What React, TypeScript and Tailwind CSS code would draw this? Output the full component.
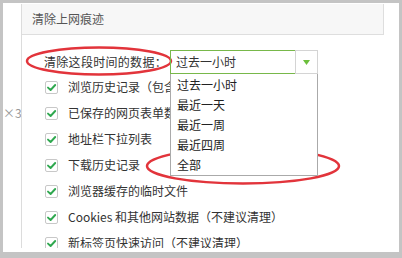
const FONT = "font-['Microsoft_YaHei','Noto_Sans_CJK_SC',sans-serif]"

const RANGES = ['过去一小时', '最近一天', '最近一周', '最近四周', '全部']

const ITEMS = [
  '浏览历史记录（包含地址栏中的记录）',
  '已保存的网页表单数据',
  '地址栏下拉列表',
  '下载历史记录',
  '浏览器缓存的临时文件',
  'Cookies 和其他网站数据（不建议清理）',
  '新标签页快速访问（不建议清理）',
]

function Check() {
  return (
    <span className="flex h-[13px] w-[13px] shrink-0 items-center justify-center rounded-[2px] border border-[#c8c8c8] bg-white">
      <svg width="11" height="11" viewBox="0 0 11 11">
        <path d="M2 5.6 L4.6 8 L9.2 3" fill="none" stroke="#2fa84f" strokeWidth="1.9" strokeLinecap="round" strokeLinejoin="round" />
      </svg>
    </span>
  )
}

export default function App() {
  return (
    <div className={`relative flex h-[258px] w-[402px] bg-[#c4c4c4] px-[3px] pt-[3px] pb-[6px] ${FONT}`}>
      <div className="flex flex-1 overflow-hidden bg-white pb-[4px]">
        <div className="w-[18px] shrink-0 overflow-hidden whitespace-nowrap pt-[100px] text-[12px] leading-[20px] text-[#999]">
          ×38
        </div>

        <div className="mt-[1px] flex w-[363px] shrink-0 flex-col overflow-hidden border-l border-[#dcdcdc]">
          <div className="flex h-[31px] shrink-0 items-center border-r border-b border-[#dedede] bg-[#f7f7f7] pl-[10px] text-[12px] text-[#555]">
            清除上网痕迹
          </div>

          <div className="flex flex-col pl-[22px] pt-[15px]">
            <div className="flex h-[24px] items-center text-[12px] text-[#333]">
              <span className="w-[126px] shrink-0 whitespace-nowrap tracking-[0.3px]">清除这段时间的数据：</span>
              <div className="relative z-10 flex h-[24px] w-[148px]">
                <div className="flex flex-1 items-center border-y border-l border-[#78b84a] pl-[5px]">过去一小时</div>
                <div className="flex w-[23px] items-center justify-center border border-[#d4d4d4]">
                  <svg width="7" height="5" viewBox="0 0 7 5">
                    <path d="M0 0 H7 L3.5 5 Z" fill="#6cbf3c" />
                  </svg>
                </div>
                <div className="absolute left-0 top-full w-[148px] border-x border-b border-[#aaaaaa] bg-white pt-[1px]">
                  {RANGES.map((r) => (
                    <div key={r} className="flex h-[20px] items-center pl-[6px] text-[12px] text-[#222]">
                      {r}
                    </div>
                  ))}
                </div>
              </div>
            </div>

            <div className="flex flex-col pl-[1px]">
              {ITEMS.map((item) => (
                <div key={item} className="flex h-[26px] shrink-0 items-center gap-[10px] whitespace-nowrap text-[12px] text-[#333]">
                  <Check />
                  <span>{item}</span>
                </div>
              ))}
            </div>
          </div>
        </div>
      </div>

      <svg className="pointer-events-none absolute left-0 top-0" width="402" height="258">
        <ellipse cx="99" cy="61" rx="72" ry="13.5" fill="none" stroke="#e2343b" strokeWidth="2.5" />
        <ellipse cx="243" cy="166" rx="96" ry="17.5" fill="none" stroke="#e2343b" strokeWidth="2.5" />
      </svg>
    </div>
  )
}
